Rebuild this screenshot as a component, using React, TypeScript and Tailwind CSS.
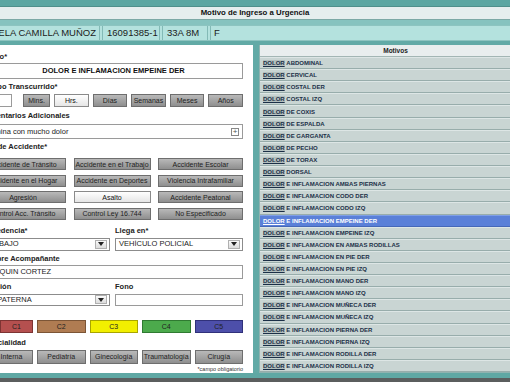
import React from "react";

const TIEMPOS = ["Mins.", "Hrs.", "Días", "Semanas", "Meses", "Años"];

const ACCIDENTES = [
  "Accidente de Tránsito",
  "Accidente en el Trabajo",
  "Accidente Escolar",
  "Accidente en el Hogar",
  "Accidente en Deportes",
  "Violencia Intrafamiliar",
  "Agresión",
  "Asalto",
  "Accidente Peatonal",
  "Control Acc. Tránsito",
  "Control Ley 16.744",
  "No Especificado",
];

const TRIAGE = [
  { label: "C1", cls: "bg-[#b5504f] border-[#7d3433]" },
  { label: "C2", cls: "bg-[#b07c52] border-[#7c5536]" },
  { label: "C3", cls: "bg-[#f2ef00] border-[#a9a500]" },
  { label: "C4", cls: "bg-[#4caa4c] border-[#2f7a31]" },
  { label: "C5", cls: "bg-[#4d4faa] border-[#30317a]" },
];

const ESPECIALIDADES = ["Medicina Interna", "Pediatría", "Ginecología", "Traumatología", "Cirugía"];

const MOTIVOS = [
  "ABDOMINAL",
  "CERVICAL",
  "COSTAL DER",
  "COSTAL IZQ",
  "DE COXIS",
  "DE ESPALDA",
  "DE GARGANTA",
  "DE PECHO",
  "DE TORAX",
  "DORSAL",
  "E INFLAMACION AMBAS PIERNAS",
  "E INFLAMACION CODO DER",
  "E INFLAMACION CODO IZQ",
  "E INFLAMACION EMPEINE DER",
  "E INFLAMACION EMPEINE IZQ",
  "E INFLAMACION EN AMBAS RODILLAS",
  "E INFLAMACION EN PIE DER",
  "E INFLAMACION EN PIE IZQ",
  "E INFLAMACION MANO DER",
  "E INFLAMACION MANO IZQ",
  "E INFLAMACION MUÑECA DER",
  "E INFLAMACION MUÑECA IZQ",
  "E INFLAMACION PIERNA DER",
  "E INFLAMACION PIERNA IZQ",
  "E INFLAMACION RODILLA DER",
  "E INFLAMACION RODILLA IZQ",
];

const SELECTED = "E INFLAMACION EMPEINE DER";

const grayBtn =
  "flex items-center justify-center border border-[#6e6e6e] bg-gradient-to-b from-[#b9b9b9] to-[#8f8f8f] text-[#1e1e1e] text-[7px] leading-none whitespace-nowrap overflow-hidden";
const activeBtn =
  "flex items-center justify-center border border-[#8a8a8a] bg-gradient-to-b from-[#ffffff] to-[#e6e6e6] text-[#111] text-[7px] leading-none whitespace-nowrap";

const Label = ({ children, className = "" }: { children: React.ReactNode; className?: string }) => (
  <div className={`shrink-0 h-[8px] text-[7.5px] leading-[8px] font-bold text-[#222] whitespace-nowrap ${className}`}>
    {children}
  </div>
);

const SelectBox = ({ value, className = "" }: { value: string; className?: string }) => (
  <div className={`shrink-0 h-[13px] border border-[#8c8c8c] bg-white flex items-center ${className}`}>
    <span className="flex-1 pl-[3px] text-[7.5px] leading-none text-[#222] whitespace-nowrap overflow-hidden">{value}</span>
    <span className="w-[12px] h-[9px] mr-[2px] border border-[#b0b0b0] bg-gradient-to-b from-[#fafafa] to-[#dcdcdc] flex items-center justify-center">
      <span className="w-0 h-0 border-l-[3px] border-r-[3px] border-t-[4px] border-l-transparent border-r-transparent border-t-[#222]" />
    </span>
  </div>
);

const App = () => {
  return (
    <div className="w-[510px] h-[382px] overflow-hidden bg-[#62aaa6] flex flex-col font-['Liberation_Sans',Arial,sans-serif]">
      {/* window title */}
      <div className="shrink-0 h-[7px] bg-[#5ca6a2] border-b border-[#4f8f8b]" />
      <div className="shrink-0 h-[13px] bg-[#e6eeee] border-b border-[#7da9a6] flex items-center justify-center text-[7.8px] font-bold text-[#111]">
        Motivo de Ingreso a Urgencia
      </div>
      <div className="shrink-0 h-[5px] bg-[#86c3bf]" />

      {/* paciente */}
      <div className="shrink-0 h-[16px] bg-[#b4e2de] border-y border-[#8dc4c0] flex text-[9.5px] leading-none text-[#1b1b1b]">
        <div className="w-[100px] flex items-center justify-end pr-[3px] border-r border-[#83bab6] whitespace-nowrap overflow-hidden">
          ANGELA CAMILLA MUÑOZ
        </div>
        <div className="w-[58px] ml-[2px] flex items-center pl-[4px] border-x border-[#83bab6] whitespace-nowrap">16091385-1</div>
        <div className="w-[46px] ml-[2px] flex items-center pl-[4px] border-x border-[#83bab6] whitespace-nowrap">33A 8M</div>
        <div className="w-[30px] ml-[2px] flex items-center pl-[3px] border-l border-[#83bab6]">F</div>
        <div className="flex-1" />
      </div>

      <div className="flex-1 flex pt-[4px] min-h-0">
        {/* formulario */}
        <div className="-ml-[30px] w-[283px] h-[328px] shrink-0 bg-white pl-[10px] pr-[10px] pt-[8px] flex flex-col overflow-hidden">
          <Label>Motivo*</Label>
          <div className="shrink-0 mt-[2px] h-[16px] border border-[#9a9a9a] flex items-center justify-center text-[7.5px] font-bold text-[#111]">
            <span className="ml-[4px]">DOLOR E INFLAMACION EMPEINE DER</span>
          </div>

          <Label className="mt-[4px]">Tiempo Transcurrido*</Label>
          <div className="shrink-0 mt-[3px] h-[13px] flex">
            <div className="w-[32px] border border-[#9a9a9a] bg-white" />
            <div className="flex-1 ml-[11px] flex gap-[4px]">
              {TIEMPOS.map((t) => (
                <div
                  key={t}
                  className={`${t === "Mins." ? "w-[27px] shrink-0" : "flex-1"} ${t === "Hrs." ? activeBtn : grayBtn}`}
                >
                  {t}
                </div>
              ))}
            </div>
          </div>

          <Label className="mt-[5px]">Comentarios Adicionales</Label>
          <div className="shrink-0 mt-[4px] h-[15px] border border-[#9a9a9a] flex items-center pl-[4px] pr-[3px]">
            <span className="flex-1 text-[7.5px] text-[#222] whitespace-nowrap">Camina con mucho dolor</span>
            <span className="w-[8px] h-[8px] border border-[#888] flex items-center justify-center text-[8px] leading-none text-[#555]">
              +
            </span>
          </div>

          <Label className="mt-[4px]">Tipo de Accidente*</Label>
          <div className="shrink-0 mt-[7px] grid grid-cols-[86px_77px_85px] justify-between gap-y-[4.5px]">
            {ACCIDENTES.map((a) => (
              <div key={a} className={`h-[12px] ${a === "Asalto" ? activeBtn : grayBtn}`}>
                {a}
              </div>
            ))}
          </div>

          <div className="shrink-0 mt-[7px] flex gap-[5px]">
            <div className="w-[130px] flex flex-col">
              <Label>Procedencia*</Label>
              <SelectBox className="mt-[3px]" value="TRABAJO" />
            </div>
            <div className="flex-1 flex flex-col">
              <Label>Llega en*</Label>
              <SelectBox className="mt-[3px]" value="VEHÍCULO POLICIAL" />
            </div>
          </div>

          <Label className="mt-[4px]">Nombre Acompañante</Label>
          <div className="shrink-0 mt-[2px] h-[14px] border border-[#9a9a9a] flex items-center pl-[4px] text-[7.5px] text-[#222]">
            JOAQUIN CORTEZ
          </div>

          <div className="shrink-0 mt-[4px] flex gap-[5px]">
            <div className="w-[130px] flex flex-col">
              <Label>Relación</Label>
              <SelectBox className="mt-[3px] !h-[12px]" value="TIA PATERNA" />
            </div>
            <div className="flex-1 flex flex-col">
              <Label>Fono</Label>
              <div className="mt-[3px] h-[12px] border border-[#9a9a9a] bg-white" />
            </div>
          </div>

          <Label className="mt-[3px] -ml-[3px]">Triage</Label>
          <div className="shrink-0 mt-[3px] h-[13px] flex gap-[4px] pl-[20px]">
            {TRIAGE.map((c, i) => (
              <div
                key={c.label}
                className={`${i === 0 ? "w-[33px] shrink-0" : "flex-1"} flex items-center justify-center border text-[7px] leading-none text-[#222] ${c.cls}`}
              >
                {c.label}
              </div>
            ))}
          </div>

          <Label className="mt-[6px]">Especialidad</Label>
          <div className="shrink-0 mt-[3px] h-[14px] flex gap-[4px] -ml-[20px]">
            {ESPECIALIDADES.map((e, i) => (
              <div key={e} className={`${i === 0 ? "w-[73px] shrink-0" : "flex-1"} ${grayBtn}`}>
                {e}
              </div>
            ))}
          </div>
          <div className="shrink-0 mt-[2px] text-right text-[5.5px] leading-[6px] text-[#333]">*campo obligatorio</div>
        </div>

        {/* lista de motivos */}
        <div className="ml-[6px] -mr-[22px] flex-1 h-[328px] border-x border-b border-[#8fb3b0] bg-[#b9c9c7] flex flex-col">
          <div className="shrink-0 h-[12px] bg-[#e9eeee] border-b border-[#a3b6b4] flex items-center justify-center text-[6.5px] font-bold text-[#222]">
            Motivos
          </div>
          <div className="h-[315px] grid grid-rows-[repeat(26,1fr)]">
            {MOTIVOS.map((m) => {
              const sel = m === SELECTED;
              return (
                <div
                  key={m}
                  className={`flex items-center pl-[3px] border-t border-b text-[6px] font-bold leading-none whitespace-nowrap ${
                    sel
                      ? "bg-[#5a80d8] border-t-[#7f9fe6] border-b-[#4568b8] text-white"
                      : "bg-[#c9d5d3] border-t-[#dde6e5] border-b-[#98adab] text-[#1b2f47]"
                  }`}
                >
                  <span className={`underline ${sel ? "" : "bg-[#b3bfbe]"}`}>DOLOR</span>
                  <span>&nbsp;{m}</span>
                </div>
              );
            })}
          </div>
        </div>
      </div>

      <div className="shrink-0 h-[5px] bg-[#5fa8a4]" />
      <div className="shrink-0 h-[4px] bg-[#5b5e5e]" />
    </div>
  );
};

export default App;
